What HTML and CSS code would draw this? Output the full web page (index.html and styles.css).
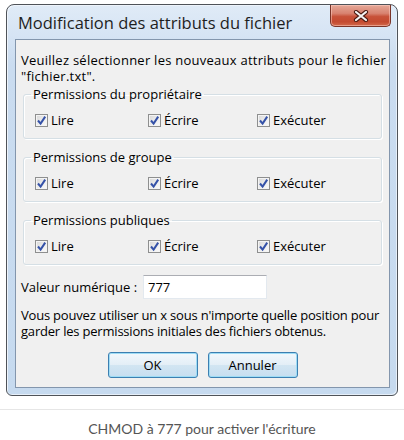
FILE: index.html
```html
<!DOCTYPE html>
<html lang="fr">
<head>
<meta charset="utf-8">
<link rel="stylesheet" href="styles.css">
</head>
<body>
<div class="page">
  <div class="window">
    <div class="titlebar">
      <span class="title">Modification des attributs du fichier</span>
      <span class="close">
        <svg width="16" height="12" viewBox="0 0 16 12">
          <path d="M3 2 L13 10 M13 2 L3 10" stroke="#4a1a12" stroke-width="4.2" stroke-linecap="round"/>
          <path d="M3 2 L13 10 M13 2 L3 10" stroke="#f4f4f4" stroke-width="2.2" stroke-linecap="round"/>
        </svg>
      </span>
    </div>
    <div class="client">
      <p class="intro">Veuillez sélectionner les nouveaux attributs pour le fichier<br>"fichier.txt".</p>

      <fieldset class="group">
        <legend>Permissions du propriétaire</legend>
        <div class="row">
          <span class="check"><span class="box"><svg width="11" height="11" viewBox="0 0 11 11"><path d="M2 5.5 L4.6 8.6 L9.2 1.6" fill="none" stroke="#3552a8" stroke-width="2"/></svg></span>Lire</span>
          <span class="check"><span class="box"><svg width="11" height="11" viewBox="0 0 11 11"><path d="M2 5.5 L4.6 8.6 L9.2 1.6" fill="none" stroke="#3552a8" stroke-width="2"/></svg></span>Écrire</span>
          <span class="check"><span class="box"><svg width="11" height="11" viewBox="0 0 11 11"><path d="M2 5.5 L4.6 8.6 L9.2 1.6" fill="none" stroke="#3552a8" stroke-width="2"/></svg></span>Exécuter</span>
        </div>
      </fieldset>

      <fieldset class="group">
        <legend>Permissions de groupe</legend>
        <div class="row">
          <span class="check"><span class="box"><svg width="11" height="11" viewBox="0 0 11 11"><path d="M2 5.5 L4.6 8.6 L9.2 1.6" fill="none" stroke="#3552a8" stroke-width="2"/></svg></span>Lire</span>
          <span class="check"><span class="box"><svg width="11" height="11" viewBox="0 0 11 11"><path d="M2 5.5 L4.6 8.6 L9.2 1.6" fill="none" stroke="#3552a8" stroke-width="2"/></svg></span>Écrire</span>
          <span class="check"><span class="box"><svg width="11" height="11" viewBox="0 0 11 11"><path d="M2 5.5 L4.6 8.6 L9.2 1.6" fill="none" stroke="#3552a8" stroke-width="2"/></svg></span>Exécuter</span>
        </div>
      </fieldset>

      <fieldset class="group">
        <legend>Permissions publiques</legend>
        <div class="row">
          <span class="check"><span class="box"><svg width="11" height="11" viewBox="0 0 11 11"><path d="M2 5.5 L4.6 8.6 L9.2 1.6" fill="none" stroke="#3552a8" stroke-width="2"/></svg></span>Lire</span>
          <span class="check"><span class="box"><svg width="11" height="11" viewBox="0 0 11 11"><path d="M2 5.5 L4.6 8.6 L9.2 1.6" fill="none" stroke="#3552a8" stroke-width="2"/></svg></span>Écrire</span>
          <span class="check"><span class="box"><svg width="11" height="11" viewBox="0 0 11 11"><path d="M2 5.5 L4.6 8.6 L9.2 1.6" fill="none" stroke="#3552a8" stroke-width="2"/></svg></span>Exécuter</span>
        </div>
      </fieldset>

      <div class="value-row">
        <span class="value-label">Valeur numérique :</span>
        <span class="input">777</span>
      </div>

      <p class="note">Vous pouvez utiliser un x sous n'importe quelle position pour<br>garder les permissions initiales des fichiers obtenus.</p>

      <div class="buttons">
        <span class="btn">OK</span>
        <span class="btn">Annuler</span>
      </div>
    </div>
  </div>
  <div class="sep"></div>
  <p class="caption">CHMOD à 777 pour activer l'écriture</p>
</div>
</body>
</html>
```

FILE: styles.css
```css
html, body {
  margin: 0;
  padding: 0;
  background: #fff;
}

.page {
  width: 404px;
  height: 440px;
  overflow: hidden;
  font-family: "Open Sans", "Noto Sans", sans-serif;
}

.window {
  box-sizing: border-box;
  margin: 4px 0 0 6px;
  width: 392px;
  height: 392px;
  border: 1px solid #4f5359;
  border-radius: 8px 8px 6px 6px;
  background: linear-gradient(180deg, #e0ebf7 0px, #d6e4f4 30px, #cadcf0 60px, #c6daef 100%);
  box-shadow: inset 1px 1px 0 #eef4fb, inset -1px -1px 0 #e6eff9;
  display: flex;
  flex-direction: column;
}

.titlebar {
  height: 34px;
  display: flex;
  justify-content: space-between;
  align-items: flex-start;
}

.title {
  padding: 7px 0 0 11px;
  font-size: 16.5px;
  line-height: 22px;
  color: #1e1e1e;
}

.close {
  box-sizing: border-box;
  width: 61px;
  height: 22px;
  margin-right: 6px;
  border: 1px solid #7a3428;
  border-top: none;
  border-radius: 0 0 5px 5px;
  background: linear-gradient(180deg, #e6a898 0%, #d88270 40%, #c8523a 55%, #c44a30 80%, #d26a4c 100%);
  box-shadow: inset 0 0 0 1px rgba(255, 210, 200, 0.5);
  display: flex;
  align-items: center;
  justify-content: center;
}

.client {
  box-sizing: border-box;
  margin-left: 8px;
  width: 375px;
  height: 349px;
  border: 1px solid #8396ad;
  background: #f0f0f0;
  padding: 12px 0 0 5px;
  font-size: 13px;
  color: #000;
}

.intro {
  margin: 0 0 2px 0;
  line-height: 16px;
  white-space: nowrap;
  letter-spacing: 0.25px;
}

.group {
  margin: 0 7px 10px 2px;
  padding: 0 8px 9px 6px;
  border: 1px solid #d5dfe5;
  border-radius: 3px;
  box-shadow: inset 1px 1px 0 #fff, 1px 1px 0 #fff;
  min-inline-size: 0;
}

.group legend {
  padding: 0 2px;
  line-height: 16px;
  margin-left: 1px;
}

.row {
  display: grid;
  grid-template-columns: 113px 109px auto;
  padding: 10px 0 0 5px;
  line-height: 17px;
}

.check {
  display: flex;
  align-items: center;
}

.box {
  box-sizing: border-box;
  width: 13px;
  height: 13px;
  margin-right: 3px;
  border: 1px solid #8e8f8f;
  background: linear-gradient(135deg, #d6d6d6 0%, #ececec 50%, #fbfbfb 100%);
  box-shadow: inset 0 0 0 1px #f4f4f4;
  display: flex;
  align-items: center;
  justify-content: center;
}

.value-row {
  display: flex;
  align-items: center;
  margin-top: 10px;
}

.value-label {
  width: 122px;
}

.input {
  box-sizing: border-box;
  width: 124px;
  height: 24px;
  padding-left: 4px;
  background: #fff;
  border: 1px solid #e3e9ef;
  border-top-color: #abadb3;
  line-height: 22px;
}

.note {
  margin: 8px 0 0 0;
  line-height: 16px;
  white-space: nowrap;
  letter-spacing: -0.2px;
}

.buttons {
  display: flex;
  justify-content: center;
  gap: 10px;
  margin-top: 13px;
  padding-right: 5px;
}

.btn {
  box-sizing: border-box;
  width: 90px;
  height: 26px;
  border: 1px solid #3c7fb1;
  border-radius: 3px;
  background: linear-gradient(180deg, #f2f8fc 0%, #e3eef6 50%, #d2e5f2 51%, #c6def0 100%);
  box-shadow: inset 0 0 0 1px #9edcf5;
  display: flex;
  align-items: center;
  justify-content: center;
  font-size: 13px;
  color: #000;
}

.sep {
  margin-top: 13px;
  height: 1px;
  background: #e6e6e6;
}

.caption {
  margin: 10px 0 0 0;
  text-align: center;
  font-family: "Lato", "Open Sans", sans-serif;
  font-size: 14px;
  line-height: 18px;
  color: #555;
}
```
